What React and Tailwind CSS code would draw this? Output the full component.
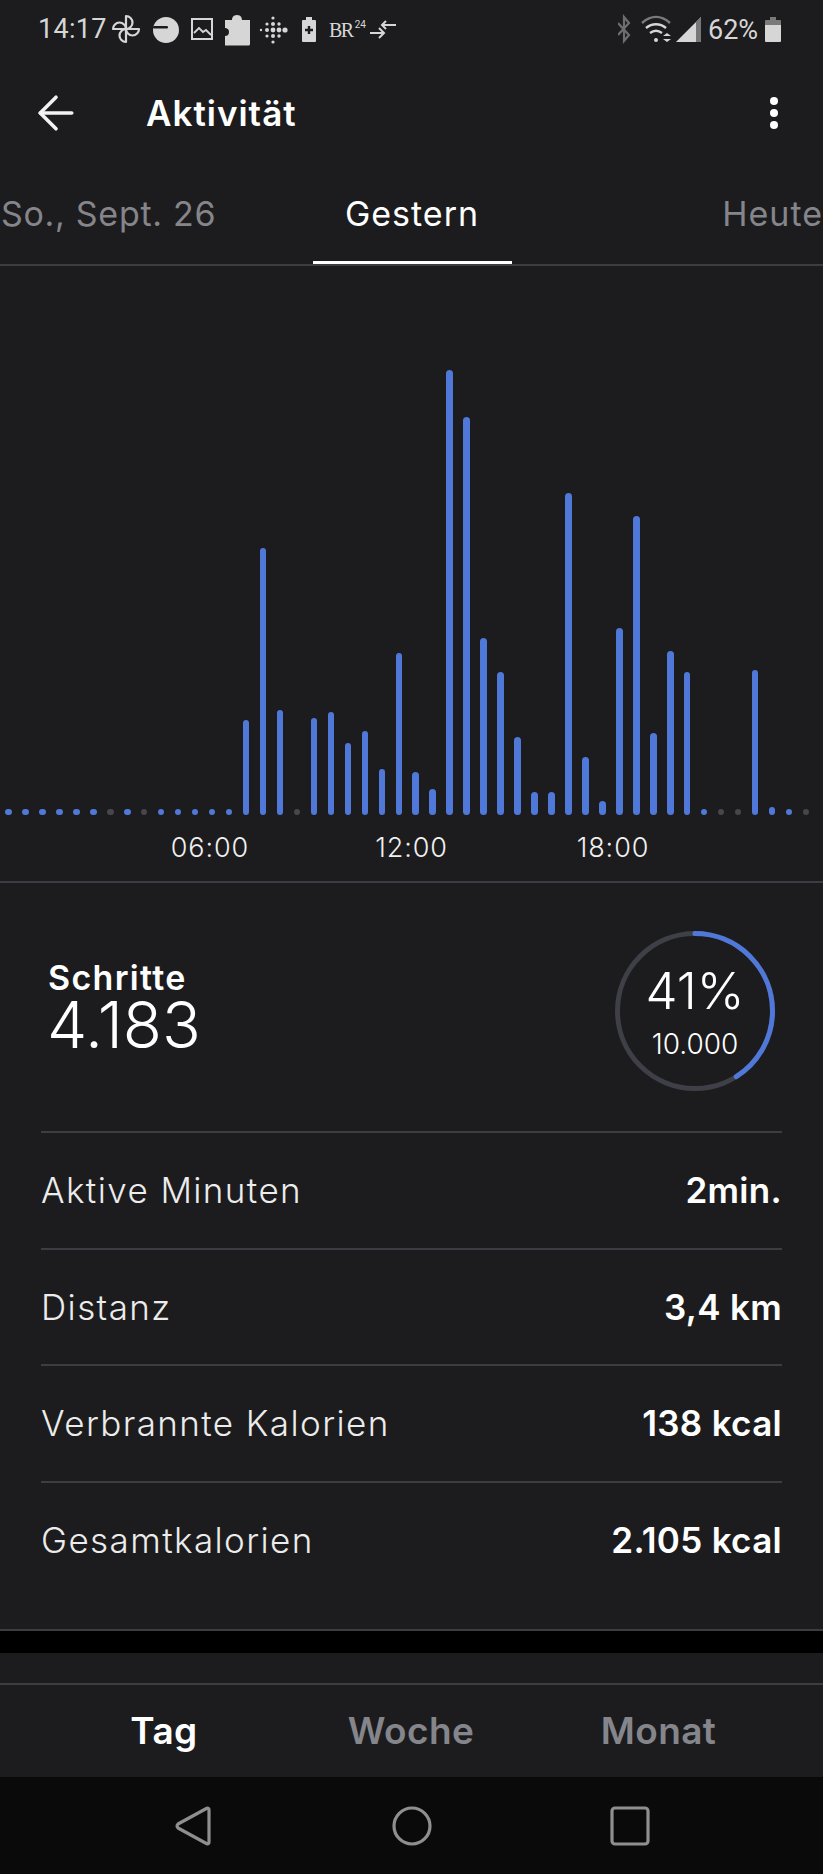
import { ArrowLeft } from 'lucide-react';

const BARS = [
  0, 0, 0, 0, 0, 0, -1, 0, -1, 0, 0, 0, 0, 0,
  95, 267, 105, -1, 97, 103, 72, 84, 46, 162, 43, 26, 445, 398, 177, 143, 78, 23, 23, 322, 58, 14, 187, 299, 82, 164, 143,
  0, -1, -1, 145, 8, 0, -1,
];

const ROWS = [
  ['Aktive Minuten', '2min.'],
  ['Distanz', '3,4 km'],
  ['Verbrannte Kalorien', '138 kcal'],
  ['Gesamtkalorien', '2.105 kcal'],
];

function LeftIcons() {
  return (
    <svg width="290" height="58" viewBox="0 0 290 58" className="ml-[4px]" fill="none">
      {/* pinwheel */}
      <g stroke="#d6d6d6" strokeWidth="2.2" strokeLinejoin="round">
        <path d="M15 29V16a6.5 6.5 0 0 1 0 13z" />
        <path d="M15 29h13a6.5 6.5 0 0 1-13 0z" />
        <path d="M15 29v13a6.5 6.5 0 0 1 0-13z" />
        <path d="M15 29H2a6.5 6.5 0 0 1 13 0z" />
      </g>
      {/* half disc */}
      <circle cx="55" cy="30" r="13" fill="#d6d6d6" />
      <rect x="42" y="26" width="15" height="2.5" rx="1.2" fill="#1c1c1e" />
      {/* picture */}
      <rect x="81" y="19" width="20" height="20" stroke="#d6d6d6" strokeWidth="2" />
      <path d="M83 33l5-5 4 4 3-2 5 5" stroke="#d6d6d6" strokeWidth="1.8" />
      {/* puzzle */}
      <path d="M114 20h7c0-2 1-5 5-5s5 3 5 5h8v24a1.5 1.5 0 0 1-1.5 1.5H114V36c2 0 4-1 4-4s-2-4-4-4z" fill="#d6d6d6" />
      {/* fitbit dots */}
      <g fill="#d6d6d6">
        <circle cx="162" cy="18" r="1.6" /><circle cx="162" cy="24" r="2" /><circle cx="162" cy="30" r="2.4" /><circle cx="162" cy="36" r="2" /><circle cx="162" cy="42" r="1.6" />
        <circle cx="156" cy="24" r="1.6" /><circle cx="156" cy="30" r="2" /><circle cx="156" cy="36" r="1.6" />
        <circle cx="150" cy="30" r="1.2" /><circle cx="168" cy="24" r="1.7" /><circle cx="168" cy="30" r="2.4" /><circle cx="168" cy="36" r="1.7" />
        <circle cx="174" cy="30" r="2.6" />
      </g>
      {/* battery plus */}
      <path d="M191 21a1 1 0 0 1 1-1h3v-3h6v3h3a1 1 0 0 1 1 1v20a1 1 0 0 1-1 1h-12a1 1 0 0 1-1-1z" fill="#d6d6d6" />
      <path d="M198 26v8M194 30h8" stroke="#1c1c1e" strokeWidth="2.4" />
      {/* arrows */}
      <g stroke="#d6d6d6" strokeWidth="2" fill="none">
        <path d="M259 33h14M268 28l5 5-5 5" />
        <path d="M285 25h-14M275 21l-4 4 4 4" />
      </g>
    </svg>
  );
}

function RightIcons() {
  return (
    <svg width="165" height="58" viewBox="0 0 165 58" fill="none">
      {/* bluetooth */}
      <path d="M0 23l11 12-5 6V17l5 6-11 12" stroke="#6e6e6e" strokeWidth="2.2" />
      {/* wifi */}
      <path d="M24 23c9-8 19-8 28 0" stroke="#7a7a7a" strokeWidth="2.4" />
      <path d="M28 28c6-5 14-5 20 0" stroke="#d6d6d6" strokeWidth="2.4" />
      <path d="M32 33c4-3 8-3 12 0" stroke="#d6d6d6" strokeWidth="2.4" />
      <circle cx="38" cy="40" r="2" fill="#d6d6d6" />
      <path d="M45 36h8l-4-3zM45 39h8l-4 3z" fill="#d6d6d6" />
      {/* signal */}
      <path d="M58 42L83 17v25z" fill="#d6d6d6" />
      <path d="M78 22l5-5v25h-5z" fill="#777" />
      {/* battery */}
      <path d="M147 25v-4a1 1 0 0 1 1-1h4v-3h6v3h4a1 1 0 0 1 1 1v4z" fill="#7a7a7a" />
      <path d="M147 25h16v16a1 1 0 0 1-1 1h-14a1 1 0 0 1-1-1z" fill="#d6d6d6" />
    </svg>
  );
}

export default function App() {
  return (
    <div className="w-[823px] h-[1874px] flex flex-col bg-[#1c1c1e] overflow-hidden font-['Inter',sans-serif] text-white">
      <div className="h-[58px] flex items-center justify-between">
        <div className="flex items-center relative">
          <span className="ml-[38px] text-[27px] text-[#d6d6d6] font-['Roboto',sans-serif] tracking-[0.3px]">14:17</span>
          <LeftIcons />
          <span className="absolute left-[329px] top-[19px] flex items-start font-['Liberation_Serif',serif] text-[20px] leading-[22px] tracking-[-1.5px] text-[#d6d6d6]">
            BR<span className="ml-[2px] text-[10px] leading-[12px] tracking-normal font-['Roboto',sans-serif]">24</span>
          </span>
        </div>
        <div className="flex items-center relative mr-[40px]">
          <RightIcons />
          <span className="absolute left-[90px] top-[13px] text-[27px] leading-[34px] text-[#d6d6d6] font-['Roboto',sans-serif]">62%</span>
        </div>
      </div>

      <div className="h-[110px] flex items-center justify-between pl-[29px] pr-[45px]">
        <div className="flex items-center">
          <ArrowLeft size={54} strokeWidth={1.6} className="text-[#f2f2f2]" />
          <span className="ml-[63px] text-[35px] tracking-[1px] font-semibold">Aktivität</span>
        </div>
        <div className="flex flex-col gap-[4px]">
          <div className="w-[8px] h-[8px] rounded-full bg-white" />
          <div className="w-[8px] h-[8px] rounded-full bg-white" />
          <div className="w-[8px] h-[8px] rounded-full bg-white" />
        </div>
      </div>

      <div className="h-[98px] flex border-b-2 border-[#3c3d43] overflow-hidden text-[34px] leading-[40px] tracking-[1px]">
        <div className="flex-1 pt-[26px] pl-[1px] tracking-[0.7px] text-[#85858b] whitespace-nowrap">So., Sept. 26</div>
        <div className="w-[199px] h-[96px] pt-[26px] text-center border-b-[3px] border-white">Gestern</div>
        <div className="flex-1 pt-[26px] text-right text-[#85858b] whitespace-nowrap">Heute</div>
      </div>

      <div className="h-[617px] flex flex-col justify-end border-b-2 border-[#3c3d43]">
        <div className="grid grid-cols-[repeat(48,16.97px)] items-end h-[460px]">
          {BARS.map((h, i) => (
            <div key={i} className="flex justify-center">
              <div
                className={`w-[6.5px] rounded-full ${h < 0 ? 'bg-[#46464c]' : 'bg-[#4f78d8]'}`}
                style={{ height: h > 0 ? h : 6.5 }}
              />
            </div>
          ))}
        </div>
        <div className="h-[66px] flex justify-center items-center text-[27px] tracking-[0.9px] font-light text-[#f0f0f0]">
          <span className="w-[201.5px] text-center">06:00</span>
          <span className="w-[201.5px] text-center">12:00</span>
          <span className="w-[201.5px] text-center">18:00</span>
        </div>
      </div>

      <div className="h-[248px] flex items-center justify-between px-[48px]">
        <div className="flex flex-col">
          <span className="text-[34px] leading-[36px] tracking-[1.3px] font-semibold">Schritte</span>
          <span className="text-[64px] leading-[58px] -ml-[1px] font-light">4.183</span>
        </div>
        <div className="grid w-[160px] h-[160px] mt-[7px]">
          <svg width="160" height="160" viewBox="0 0 160 160" className="col-start-1 row-start-1" fill="none">
            <circle cx="80" cy="80" r="77.5" stroke="#3e3f47" strokeWidth="5" />
            <circle cx="80" cy="80" r="77.5" stroke="#4f78d8" strokeWidth="5" strokeLinecap="round" strokeDasharray="199.6 487" transform="rotate(-90 80 80)" />
          </svg>
          <div className="col-start-1 row-start-1 flex flex-col items-center justify-center">
            <span className="text-[51px] leading-[56px] font-light">41%</span>
            <span className="text-[28px] leading-[30px] mt-[10px] font-light">10.000</span>
          </div>
        </div>
      </div>

      <div className="flex flex-col px-[41px]">
        {ROWS.map(([label, value]) => (
          <div key={label} className="h-[116.7px] flex items-center justify-between border-t-2 border-[#3c3d43]">
            <span className="text-[35px] tracking-[1.4px] font-light text-[#ececec]">{label}</span>
            <span className="text-[35px] tracking-[0.3px] font-semibold">{value}</span>
          </div>
        ))}
      </div>

      <div className="flex-1 flex flex-col justify-end">
        <div className="h-[2px] bg-[#3c3d43]" />
      </div>
      <div className="h-[22px] bg-black" />
      <div className="h-[30px]" />
      <div className="h-[94px] border-t-2 border-[#3c3d43] grid grid-cols-[328px_166px_329px] items-center text-center text-[37px] tracking-[0.4px] font-semibold text-[#85858c]">
        <span className="text-white">Tag</span>
        <span>Woche</span>
        <span>Monat</span>
      </div>
      <div className="h-[97px] bg-[#0a0a0a] flex justify-center items-center">
        <div className="w-[218.5px] flex justify-center">
          <svg width="36" height="40" viewBox="0 0 36 40" fill="none" stroke="#8f8f8f" strokeWidth="3.2">
            <path d="M34 3.5v33a1.5 1.5 0 0 1-2.6 1L3 22a3 3 0 0 1 0-4L31.4 2.5a1.5 1.5 0 0 1 2.6 1z" strokeLinejoin="round" />
          </svg>
        </div>
        <div className="w-[218.5px] flex justify-center">
          <svg width="40" height="40" viewBox="0 0 40 40" fill="none" stroke="#8f8f8f" strokeWidth="3.2">
            <circle cx="20" cy="20" r="18" />
          </svg>
        </div>
        <div className="w-[218.5px] flex justify-center">
          <svg width="40" height="40" viewBox="0 0 40 40" fill="none" stroke="#8f8f8f" strokeWidth="3.2">
            <rect x="2" y="2" width="36" height="36" rx="3" />
          </svg>
        </div>
      </div>
    </div>
  );
}
